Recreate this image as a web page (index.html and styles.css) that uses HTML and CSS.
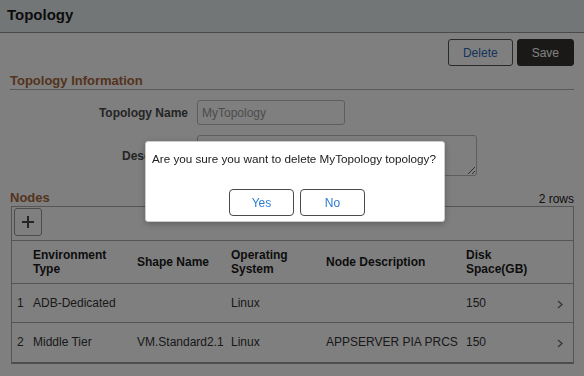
FILE: index.html
```html
<!doctype html>
<html lang="en">
  <head>
    <meta charset="UTF-8" />
    <meta name="viewport" content="width=device-width, initial-scale=1.0" />
    <title>Topology</title>
    <link rel="stylesheet" href="styles.css">
  </head>
  <body>
    <header class="page-header">
      <h1>Topology</h1>
    </header>

    <div class="toolbar">
      <button class="btn" type="button">Delete</button>
      <button class="btn btn-primary" type="button">Save</button>
    </div>

    <section class="group">
      <h2 class="group-title">Topology Information</h2>
      <div class="form">
        <label for="name">Topology Name</label>
        <input id="name" type="text" value="MyTopology" readonly />
        <label for="desc">Description</label>
        <textarea id="desc"></textarea>
      </div>
    </section>

    <section class="group nodes">
      <div class="grid-head">
        <h2>Nodes</h2>
        <span class="rows-count">2 rows</span>
      </div>

      <div class="grid">
        <div class="grid-tools">
          <button class="add" type="button" aria-label="Add row">
            <svg width="14" height="14" viewBox="0 0 14 14"><path d="M7 1v12M1 7h12" stroke="#4a4a4a" stroke-width="2" fill="none"/></svg>
          </button>
        </div>

        <table>
          <colgroup>
            <col style="width:18px"><col style="width:104px"><col style="width:94px"><col style="width:95px"><col style="width:140px"><col style="width:82px"><col style="width:28px">
          </colgroup>
          <thead>
            <tr>
              <th></th>
              <th>Environment<br>Type</th>
              <th>Shape Name</th>
              <th>Operating<br>System</th>
              <th>Node Description</th>
              <th>Disk<br>Space(GB)</th>
              <th></th>
            </tr>
          </thead>
          <tbody>
            <tr>
              <td class="num">1</td>
              <td>ADB-Dedicated</td>
              <td></td>
              <td>Linux</td>
              <td></td>
              <td>150</td>
              <td class="chev"><svg width="6" height="9" viewBox="0 0 6 9"><path d="M1 1l4 3.5L1 8" stroke="#6a6a6a" stroke-width="1.3" fill="none"/></svg></td>
            </tr>
            <tr>
              <td class="num">2</td>
              <td>Middle Tier</td>
              <td>VM.Standard2.1</td>
              <td>Linux</td>
              <td>APPSERVER PIA PRCS</td>
              <td>150</td>
              <td class="chev"><svg width="6" height="9" viewBox="0 0 6 9"><path d="M1 1l4 3.5L1 8" stroke="#6a6a6a" stroke-width="1.3" fill="none"/></svg></td>
            </tr>
          </tbody>
        </table>
      </div>
    </section>

    <div class="mask"></div>

    <div class="dialog" role="dialog">
      <p>Are you sure you want to delete MyTopology topology?</p>
      <div class="dialog-actions">
        <button class="btn dialog-btn" type="button">Yes</button>
        <button class="btn dialog-btn" type="button">No</button>
      </div>
    </div>
  </body>
</html>
```

FILE: styles.css
```css
*,
*:before,
*:after {
  box-sizing: border-box;
}

body {
  margin: 0;
  background: #fff;
  color: #333;
  font: 12px "Liberation Sans", Arial, sans-serif;
}

.page-header {
  height: 33px;
  padding-left: 7px;
  border-bottom: 1px solid #959595;
  background: #e6ecee;

  h1 {
    margin: 0;
    color: #1a1a1a;
    font-size: 15px;
    line-height: 30px;
  }
}

.toolbar {
  display: flex;
  justify-content: flex-end;
  gap: 4px;
  padding: 6px 10px 0;
}

.btn {
  height: 27px;
  padding: 0 14px;
  border: 1px solid #555;
  border-radius: 3px;
  background: #fff;
  color: #2a6cb5;
  font: 12px "Liberation Sans", Arial, sans-serif;
}

.btn-primary {
  border-color: #37332f;
  background: #37332f;
  color: #fff;
}

.group {
  margin: 0 10px;

  h2 {
    margin: 0;
    color: #a8673a;
    font-size: 13px;
    line-height: 17px;
  }
}

.group-title {
  margin-top: 6px !important;
  border-bottom: 1px solid #b4b4b4;
}

.form {
  display: grid;
  grid-template-columns: 178px auto;
  align-items: center;
  padding-top: 10px;
  column-gap: 9px;
  row-gap: 10px;

  label {
    color: #4a4a4a;
    font-weight: bold;
    text-align: right;
  }

  input {
    width: 148px;
    height: 25px;
    padding: 0 4px;
    border: 1px solid #bbb;
    border-radius: 3px;
    color: #999;
    font: 12px "Liberation Sans", Arial, sans-serif;
  }

  textarea {
    display: block;
    width: 280px;
    height: 41px;
    border: 1px solid #bbb;
    border-radius: 3px;
  }
}

.nodes {
  margin-top: 13px;
}

.grid-head {
  display: flex;
  justify-content: space-between;
  height: 17px;
}

.rows-count {
  padding-top: 3px;
  color: #222;
  line-height: 14px;
}

.grid {
  margin-left: 1px;
  border: 1px solid #aaa;
  border-bottom: 2px solid #9a9a9a;
}

.grid-tools {
  padding: 1px 2px 4px;
}

.add {
  display: flex;
  align-items: center;
  justify-content: center;
  width: 28px;
  height: 28px;
  padding: 0;
  border: 1px solid #999;
  border-radius: 3px;
  background: #fff;
}

table {
  width: 100%;
  border-collapse: collapse;
  table-layout: fixed;
}

th,
td {
  padding: 0 0 0 3px;
  border-top: 1px solid #aaa;
  text-align: left;
  vertical-align: middle;
  white-space: nowrap;
}

th {
  height: 43px;
  color: #1a1a1a;
  line-height: 14px;
}

td {
  height: 39px;
  color: #333;
}

td.num {
  padding-left: 5px;
}

td.chev {
  padding: 3px 0 0 12px;
}

.mask {
  position: fixed;
  inset: 0;
  background: rgba(0, 0, 0, 0.5);
}

.dialog {
  position: absolute;
  top: 141px;
  left: 145px;
  width: 300px;
  height: 81px;
  padding-top: 9px;
  border: 1px solid #ccc;
  border-radius: 3px;
  background: #fff;
  box-shadow: 0 2px 6px rgba(0, 0, 0, 0.25);

  p {
    margin: 0;
    padding-left: 6px;
    color: #222;
    font-size: 11.7px;
    line-height: 16px;
    white-space: nowrap;
  }
}

.dialog-actions {
  display: flex;
  justify-content: center;
  gap: 6px;
  margin-top: 22px;
  padding-left: 4px;
}

.dialog-btn {
  width: 65px;
  border-color: #4a4a4a;
  border-radius: 4px;
  color: #2b7bd2;
}
```
